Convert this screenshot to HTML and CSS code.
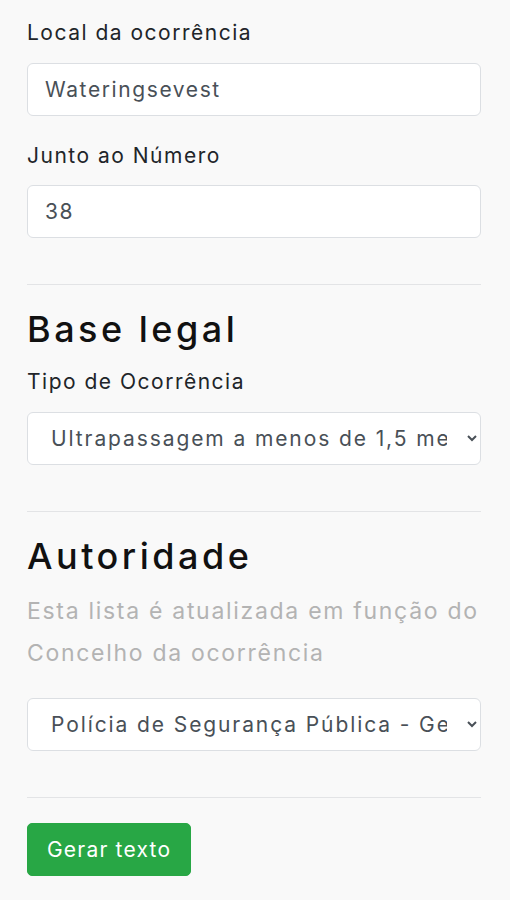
FILE: index.html
```html
<!DOCTYPE html>
<html lang="pt">
<head>
  <meta charset="UTF-8" />
  <meta name="viewport" content="width=device-width, initial-scale=1.0"/>
  <title>Ocorrência</title>
  <link rel="stylesheet" href="styles.css">
</head>
<body>

  <div class="container">
    <form id="occurrenceForm">
      <div class="form-group">
        <label for="local">Local da ocorrência</label>
        <input type="text" id="local" class="form-control" value="Wateringsevest">
      </div>

      <div class="form-group">
        <label for="numero">Junto ao Número</label>
        <input type="text" id="numero" class="form-control" value="38">
      </div>

      <hr>

      <h3>Base legal</h3>
      <div class="form-group">
        <label for="tipo">Tipo de Ocorrência</label>
        <select id="tipo" class="form-control">
          <option>Ultrapassagem a menos de 1,5 metros de um velocípede</option>
        </select>
      </div>

      <hr>

      <h3>Autoridade</h3>
      <p class="muted">Esta lista é atualizada em função do Concelho da ocorrência</p>
      <div class="form-group">
        <select id="autoridade" class="form-control">
          <option>Polícia de Segurança Pública - Geral</option>
        </select>
      </div>

      <hr>

      <button type="submit" class="btn-success">Gerar texto</button>
    </form>
  </div>

</body>
</html>
```

FILE: styles.css
```css
body {
  background-color: #f9f9f9;
  font-family: 'Inter', 'Noto Sans', sans-serif;
  font-size: 21px;
  line-height: 1.5;
  letter-spacing: 1.5px;
  color: #212529;
  margin: 0;
}

.container {
  padding: 17px 29px 0 27px;
}

.form-group {
  margin-bottom: 24px;
}

label {
  display: block;
  margin-bottom: 14px;
}

.form-control {
  display: block;
  box-sizing: border-box;
  width: 100%;
  height: 53px;
  padding: 0 17px;
  font-family: inherit;
  font-size: 21px;
  letter-spacing: 1.6px;
  color: #495057;
  background-color: #fff;
  border: 1px solid #dcdfe3;
  border-radius: 6px;
}

select.form-control {
  padding-left: 19px;
  letter-spacing: 1.9px;
}

hr {
  border: 0;
  border-top: 1px solid #e3e4e6;
  margin: 46px 0 23px;
}

h3 {
  font-size: 36px;
  font-weight: 500;
  line-height: 1.2;
  letter-spacing: 3.5px;
  margin: 0 0 15px;
  color: #111;
}

.muted {
  color: #b3b3b3;
  font-size: 23px;
  letter-spacing: 1.7px;
  line-height: 42px;
  margin: -3px 0 24px;
}

.btn-success {
  margin-top: 2px;
  padding: 0 19px;
  height: 53px;
  font-family: inherit;
  font-size: 21px;
  letter-spacing: 1.2px;
  color: #fff;
  background-color: #28a745;
  border: 1px solid #28a745;
  border-radius: 5px;
  cursor: pointer;
}

.btn-success:hover {
  background-color: #218838;
}
```
